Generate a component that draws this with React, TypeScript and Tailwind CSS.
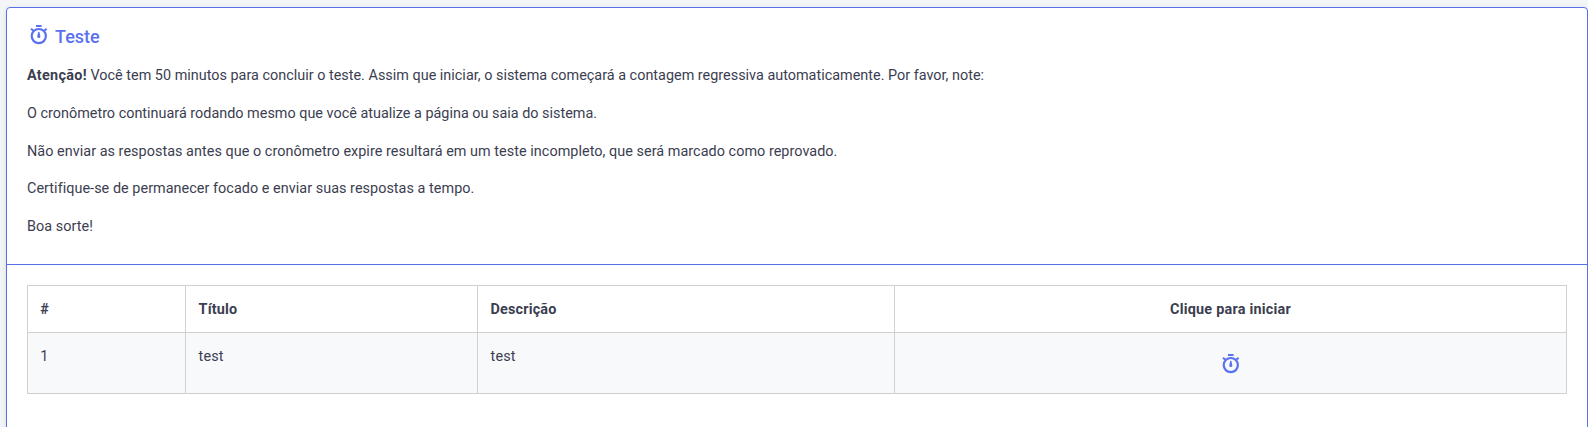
function Stopwatch({ className = "" }: { className?: string }) {
  return (
    <svg viewBox="0 0 18 20" width="18" height="20" fill="none" stroke="currentColor" className={className}>
      <circle cx="8.8" cy="11.1" r="7.1" strokeWidth="2.2" />
      <path d="M6 1h5.6" strokeWidth="2" />
      <path d="M1 3.8l2.4 2M16.6 3.8l-2.4 2" strokeWidth="2.1" />
      <path d="M8.8 6.8c.6 0 .8.5.9 1.5l.7 3.2a1.6 1.6 0 1 1-3.2 0l.7-3.2c.1-1 .3-1.5.9-1.5z" fill="currentColor" stroke="none" />
    </svg>
  );
}

export default function App() {
  return (
    <div className="flex h-[427px] flex-col overflow-hidden bg-[#f4f5f7] pt-[7px] pl-[6px] font-['Roboto',sans-serif] text-[14.4px] leading-[21.6px] text-[#3b3e50]">
      <section className="h-[520px] shrink-0 rounded-[4px] border border-[#5670e6] bg-white shadow-[0_2px_6px_rgba(0,0,0,0.1)]">
        <header className="h-[257px] border-b border-[#5670e6] px-5 pt-[17px]">
          <h1 className="flex h-6 items-start text-[18px] leading-6 font-medium text-[#5a72ee]">
            <Stopwatch className="ml-[3px]" />
            <span className="ml-[7px] leading-[23px]">Teste</span>
          </h1>
          <div className="mt-[16.4px] flex flex-col gap-4">
            <p className="tracking-[0.011px]">
              <b className="font-bold tracking-[0.3px]">Atenção!</b> Você tem 50 minutos para concluir o teste. Assim que iniciar, o sistema começará a contagem regressiva automaticamente. Por favor, note:
            </p>
            <p className="tracking-[0.007px]">O cronômetro continuará rodando mesmo que você atualize a página ou saia do sistema.</p>
            <p className="tracking-[0.043px]">Não enviar as respostas antes que o cronômetro expire resultará em um teste incompleto, que será marcado como reprovado.</p>
            <p className="tracking-[0.043px]">Certifique-se de permanecer focado e enviar suas respostas a tempo.</p>
            <p className="tracking-[0.04px]">Boa sorte!</p>
          </div>
        </header>
        <div className="px-5 pt-5">
          <table className="w-[1540px] table-fixed border-separate border-spacing-0 border-t border-l border-[#d0d0d0]">
            <colgroup>
              <col className="w-[158px]" />
              <col className="w-[292px]" />
              <col className="w-[417px]" />
              <col className="w-[672px]" />
            </colgroup>
            <thead>
              <tr className="h-[47px] text-left align-top">
                <th className="border-r border-b border-[#d0d0d0] pt-[12.6px] pr-3 pl-[12.3px] font-bold">#</th>
                <th className="border-r border-b border-[#d0d0d0] pt-[12.6px] pr-3 pl-[12.6px] font-bold tracking-[0.16px]">Título</th>
                <th className="border-r border-b border-[#d0d0d0] pt-[12.6px] pr-3 pl-[12.6px] font-bold tracking-[0.16px]">Descrição</th>
                <th className="border-r border-b border-[#d0d0d0] px-3 pt-[12.6px] text-center font-bold tracking-[0.23px]">Clique para iniciar</th>
              </tr>
            </thead>
            <tbody>
              <tr className="h-[61px] bg-[#f8f9fb] align-top">
                <td className="border-r border-b border-[#d0d0d0] pt-[12.6px] pr-3 pl-[12.3px]">1</td>
                <td className="border-r border-b border-[#d0d0d0] pt-[12.6px] pr-3 pl-[12.6px] tracking-[0.1px]">test</td>
                <td className="border-r border-b border-[#d0d0d0] pt-[12.6px] pr-3 pl-[12.6px] tracking-[0.1px]">test</td>
                <td className="border-r border-b border-[#d0d0d0] px-3 pt-[21px]">
                  <Stopwatch className="mx-auto block text-[#5a72ee]" />
                </td>
              </tr>
            </tbody>
          </table>
        </div>
      </section>
    </div>
  );
}
